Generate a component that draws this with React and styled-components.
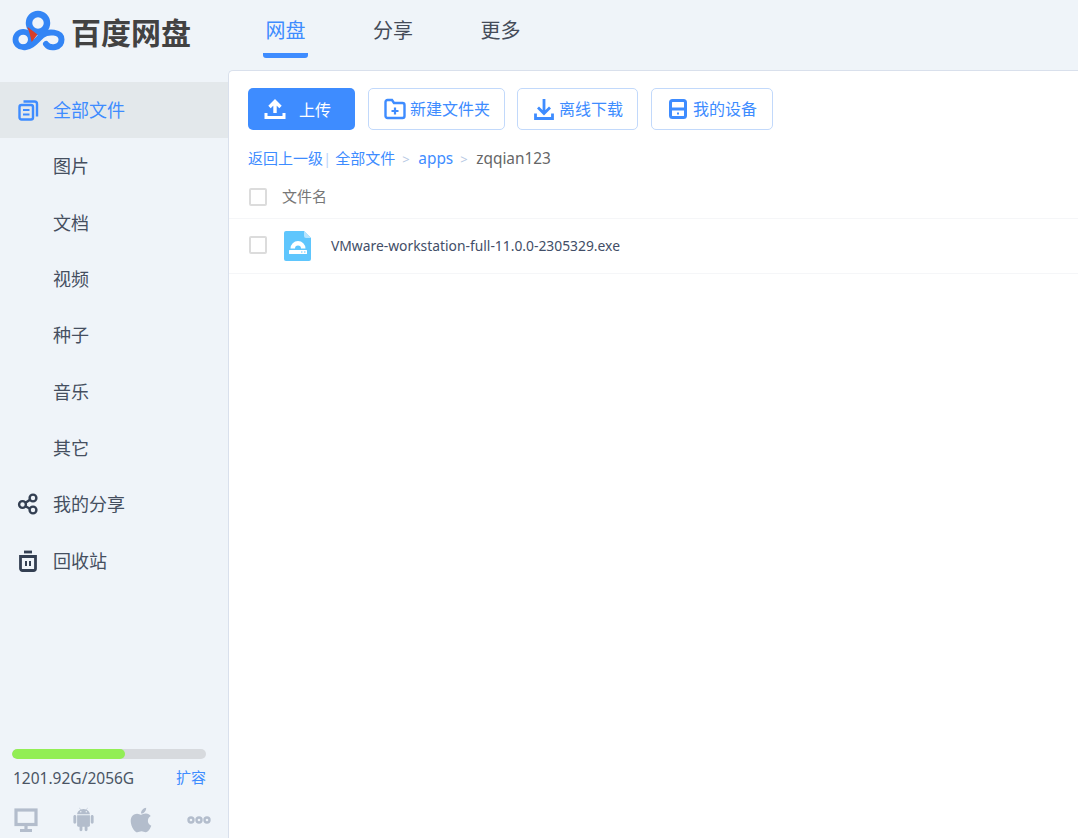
import React from "react";
import styled, { createGlobalStyle } from "styled-components";
import { FaApple } from "react-icons/fa";
import { AiFillAndroid } from "react-icons/ai";

const Global = createGlobalStyle`
  html, body { margin: 0; padding: 0; height: 100%; overflow: hidden; }
  body { font-family: "Noto Sans", "Noto Sans CJK SC", sans-serif; background: #eff4f9; }
  #root { height: 100%; }
  * { box-sizing: border-box; }
`;
const BLUE = "#3e8cff";

const Page = styled.div`
  height: 838px; width: 1078px; display: flex; flex-direction: column; background: #eff4f9; overflow: hidden;
`;
const Header = styled.header`
  height: 70px; flex: none; display: flex; align-items: flex-start;
`;
const LogoBox = styled.div`
  width: 263px; flex: none; display: flex; align-items: center; height: 62px; padding-left: 12px;
`;
const LogoMark = styled.svg` width: 54px; height: 42px; flex: none; `;
const LogoText = styled.span`
  font: 700 30px/1 "Noto Sans CJK SC", sans-serif; color: #424242; margin-left: 5px; letter-spacing: 0;
`;
const Tabs = styled.nav` display: flex; gap: 62.5px; `;
const Tab = styled.a`
  width: 45px; height: 58px; display: flex; justify-content: center; padding-top: 15px;
  font: 400 20px/1.45 "Noto Sans CJK SC", sans-serif;
  color: ${p => (p.$active ? BLUE : "#444b58")};
  border-bottom: 5px solid ${p => (p.$active ? BLUE : "transparent")};
  border-radius: 0 0 3px 3px;
  white-space: nowrap;
`;
const Body = styled.div` flex: 1; display: flex; min-height: 0; `;
const Side = styled.aside`
  width: 228px; flex: none; display: flex; flex-direction: column; padding-top: 12px;
`;
const NavItem = styled.a`
  height: 56.3px; flex: none; display: flex; align-items: center;
  background: ${p => (p.$active ? "#e3e8eb" : "transparent")};
  color: ${p => (p.$active ? BLUE : "#454f5f")};
  font: 400 18px/1 "Noto Sans CJK SC", sans-serif;
  padding: 0 0 2px 53px; position: relative;
`;
const NavIcon = styled.svg`
  position: absolute; left: 17px; top: 50%; transform: translateY(-50%); width: 22px; height: 22px;
`;
const SideFoot = styled.div` margin-top: auto; padding: 0 22px 0 12px; `;
const Bar = styled.div` height: 10px; width: 194px; border-radius: 5px; background: #d7dade; overflow: hidden; `;
const BarFill = styled.div` height: 100%; background: #92ee55; border-radius: 5px; `;
const Quota = styled.div`
  display: flex; justify-content: space-between; align-items: center; width: 194px; margin-top: 9px; height: 22px;
  font: 400 15.5px/1 "Noto Sans", sans-serif; color: #4a5464;
`;
const QuotaText = styled.span` padding-left: 1px; `;
const Expand = styled.a` font: 400 15px/1 "Noto Sans CJK SC", sans-serif; color: ${BLUE}; margin-bottom: 6px; `;
const Platforms = styled.div`
  display: flex; align-items: center; margin-top: 16px; height: 27px; margin-bottom: 5px; color: #b3bdcc; padding-left: 2px;
`;
const PlatformSlot = styled.div` width: ${p => p.$w}px; flex: none; display: flex; align-items: center; `;

const Main = styled.main`
  flex: 1; background: #fff; border: 1px solid #d9e0ec; border-width: 1px 0 0 1px; border-top-left-radius: 5px;
  display: flex; flex-direction: column; min-width: 0;
`;
const Toolbar = styled.div` display: flex; padding: 17px 0 0 19px; height: 59px; flex: none; `;
const Primary = styled.button`
  width: 107px; height: 42px; border: 0; border-radius: 5px; background: ${BLUE}; color: #fff;
  display: flex; align-items: center; padding: 0 0 0 16px; gap: 13px;
  font: 400 16px/1 "Noto Sans CJK SC", sans-serif; margin-right: 13px;
`;
const Ghost = styled.button`
  width: ${p => p.$w}px; height: 42px; border: 1px solid #c2d9fb; border-radius: 5px; background: #fff; color: ${BLUE};
  display: flex; align-items: center; padding: 0 0 0 15px; gap: 4px;
  font: 400 16px/1 "Noto Sans CJK SC", sans-serif; margin-right: ${p => p.$mr}px; white-space: nowrap;
`;
const GhostLabel = styled.span` margin-bottom: 2px; `;
const BtnIcon = styled.svg` width: 22px; height: 22px; flex: none; `;
const Crumbs = styled.div`
  display: flex; align-items: baseline; height: 20px; margin: 18px 0 0 19px; flex: none;
  font: 400 15px/20px "Noto Sans", "Noto Sans CJK SC", sans-serif; color: ${BLUE}; white-space: nowrap;
`;
const Sep = styled.span` color: #bcd6fb; margin: 0 4px 0 0; `;
const Arrow = styled.span` color: #b5c8e3; font-size: 13px; margin: 0 7px; width: 9px; `;
const Latin = styled.span` font-size: 15.4px; color: ${p => p.$muted ? "#666" : BLUE}; `;
const ListHead = styled.div`
  height: 51px; display: flex; align-items: center; padding: 7px 0 0 20px; flex: none;
  border-bottom: 1px solid #f5f6f8; font: 400 15px/1 "Noto Sans CJK SC", sans-serif; color: #777;
`;
const Check = styled.span`
  width: 18px; height: 18px; border: 2px solid #dcdcdc; border-radius: 2px; flex: none; background: #fff; display: block;
`;
const HeadLabel = styled.span` margin-left: 15px; margin-bottom: 2px; `;
const Row = styled.div`
  height: 55px; display: flex; align-items: center; padding: 0 0 2px 20px; flex: none;
  border-bottom: 1px solid #f5f6f8;
`;
const FileIcon = styled.svg` width: 28px; height: 30px; margin: 2px 0 0 17px; flex: none; `;
const FileName = styled.span`
  margin: 1px 0 0 19px; font: 400 13.85px/1 "Noto Sans", sans-serif; color: #424e67; white-space: nowrap;
`;

const Logo = () => (
  <LogoMark viewBox="12 10 54 42">
    <g fill="none" stroke="#3385f5">
      <circle cx="38" cy="23" r="9" strokeWidth="6.500" />
      <circle cx="23.200" cy="39.500" r="7.700" strokeWidth="5.800" />
      <path d="M25 47.300C32 47 36 40.500 42 35.500C48 30.500 61.500 31.500 61.500 39.500C61.500 48 50 49.500 46 44" strokeLinecap="round" strokeWidth="6" />
    </g>
    <path d="M27.300 26.700L37.500 34.500L31.700 42L29.500 33Z" fill="#d63f2a" />
  </LogoMark>
);

const Files = () => (
  <NavIcon viewBox="0 0 22 22" fill="none" stroke={BLUE} strokeWidth="2.400">
    <rect x="2.500" y="6" width="13.500" height="14.500" rx="2" />
    <path d="M6.500 2.500h11a2.500 2.500 0 0 1 2.500 2.500v12.500" />
    <path d="M6 11h6.500M6 15.500h6.500" strokeWidth="2" />
  </NavIcon>
);
const Share = () => (
  <NavIcon viewBox="0 0 22 22" fill="none" stroke="#333f52" strokeWidth="2.400">
    <circle cx="5.500" cy="11.500" r="3.400" />
    <circle cx="16" cy="5" r="3.400" />
    <circle cx="16" cy="17" r="3.400" />
    <path d="M8.500 9.800l4.500-3M8.500 13.200l4.500 2.600" />
  </NavIcon>
);
const Trash = () => (
  <NavIcon viewBox="0 0 22 22" fill="none" stroke="#333f52" strokeWidth="2.800">
    <path d="M3.500 6.500h15v12a2 2 0 0 1-2 2h-11a2 2 0 0 1-2-2z" />
    <path d="M7 2h8" />
    <path d="M9 11v5M13 11v5" strokeWidth="2" />
  </NavIcon>
);
const Upload = () => (
  <BtnIcon viewBox="0 0 22 22" fill="none" stroke="#fff" strokeWidth="3.400">
    <path d="M11 15V4M5.500 9l5.500-5.500 5.500 5.500" />
    <path d="M2 15v4.500h18V15" strokeWidth="3" />
  </BtnIcon>
);
const FolderPlus = () => (
  <BtnIcon viewBox="0 0 22 22" fill="none" stroke={BLUE} strokeWidth="2.400">
    <path d="M1.500 4a2 2 0 0 1 2-2h4.500l2 3h8.500a2 2 0 0 1 2 2v11a2 2 0 0 1-2 2h-15a2 2 0 0 1-2-2z" />
    <path d="M11 9.500v7M7.500 13h7" strokeWidth="2.200" />
  </BtnIcon>
);
const Download = () => (
  <BtnIcon viewBox="0 0 22 22" fill="none" stroke={BLUE} strokeWidth="2.800">
    <path d="M11 1v14M5 9.500l6 6 6-6" />
    <path d="M2.500 15.500v5h17v-5" />
  </BtnIcon>
);
const Device = () => (
  <BtnIcon viewBox="0 0 22 22" fill="none" stroke={BLUE} strokeWidth="3">
    <rect x="3.500" y="2.500" width="15" height="17" rx="2" />
    <path d="M3 11h16" />
    <path d="M10 15.500h2" strokeWidth="2" />
  </BtnIcon>
);
const Monitor = () => (
  <svg width="24" height="24" viewBox="0 0 24 24" fill="none" stroke="#b3bdcc">
    <rect x="2" y="2" width="20" height="14.500" strokeWidth="3.200" />
    <path d="M12 18v3.500M6 22.500h12" strokeWidth="3.200" />
  </svg>
);
const Dots = () => (
  <svg width="24" height="8" viewBox="0 0 24 8" fill="none" stroke="#b3bdcc" strokeWidth="2.400">
    <circle cx="4" cy="4" r="2.500" /><circle cx="12" cy="4" r="2.500" /><circle cx="20" cy="4" r="2.500" />
  </svg>
);
const Exe = () => (
  <FileIcon viewBox="0 0 28 30">
    <path d="M2 0h18l7 7v21a2 2 0 0 1-2 2H2a2 2 0 0 1-2-2V2a2 2 0 0 1 2-2z" fill="#5fc6fd" />
    <path d="M20 0l7 7h-5a2 2 0 0 1-2-2z" fill="#b5e4fe" />
    <path d="M6.500 17.500a7.500 7.500 0 0 1 15 0h-4.500a3 3 0 0 0-6 0z" fill="#fff" />
    <rect x="5" y="19" width="18" height="4" rx="0.500" fill="#fff" />
    <path d="M17 21h1.500M20 21h1.500" stroke="#5fc6fd" strokeWidth="1" />
  </FileIcon>
);

const items = ["图片", "文档", "视频", "种子", "音乐", "其它"];

export default function App() {
  return (
    <Page>
      <Global />
      <Header>
        <LogoBox>
          <Logo />
          <LogoText>百度网盘</LogoText>
        </LogoBox>
        <Tabs>
          <Tab $active>网盘</Tab>
          <Tab>分享</Tab>
          <Tab>更多</Tab>
        </Tabs>
      </Header>
      <Body>
        <Side>
          <NavItem $active><Files />全部文件</NavItem>
          {items.map(t => <NavItem key={t}>{t}</NavItem>)}
          <NavItem><Share />我的分享</NavItem>
          <NavItem><Trash />回收站</NavItem>
          <SideFoot>
            <Bar><BarFill style={{ width: `${(1201.92 / 2056) * 100}%` }} /></Bar>
            <Quota>
              <QuotaText>1201.92G/2056G</QuotaText>
              <Expand>扩容</Expand>
            </Quota>
            <Platforms>
              <PlatformSlot $w={56}><Monitor /></PlatformSlot>
              <PlatformSlot $w={57}><AiFillAndroid size={27} /></PlatformSlot>
              <PlatformSlot $w={60}><FaApple size={28} /></PlatformSlot>
              <PlatformSlot $w={30}><Dots /></PlatformSlot>
            </Platforms>
          </SideFoot>
        </Side>
        <Main>
          <Toolbar>
            <Primary><Upload />上传</Primary>
            <Ghost $w={137} $mr={12}><FolderPlus /><GhostLabel>新建文件夹</GhostLabel></Ghost>
            <Ghost $w={121} $mr={13}><Download /><GhostLabel>离线下载</GhostLabel></Ghost>
            <Ghost $w={122} $mr={0}><Device /><GhostLabel>我的设备</GhostLabel></Ghost>
          </Toolbar>
          <Crumbs>
            返回上一级<Sep>|</Sep>全部文件<Arrow>&gt;</Arrow><Latin>apps</Latin><Arrow>&gt;</Arrow><Latin $muted>zqqian123</Latin>
          </Crumbs>
          <ListHead><Check /><HeadLabel>文件名</HeadLabel></ListHead>
          <Row><Check /><Exe /><FileName>VMware-workstation-full-11.0.0-2305329.exe</FileName></Row>
        </Main>
      </Body>
    </Page>
  );
}
